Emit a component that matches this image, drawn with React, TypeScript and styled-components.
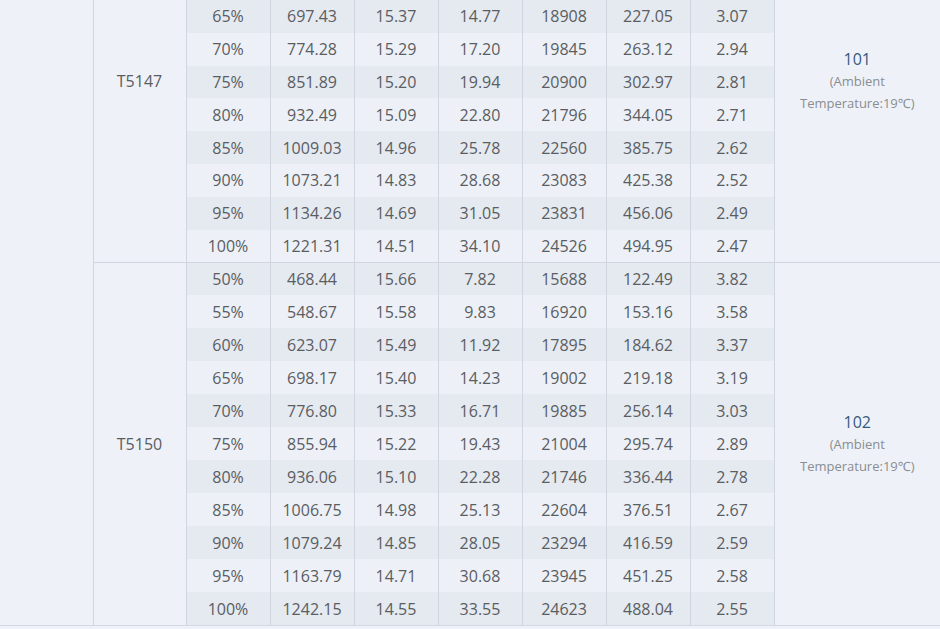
import React from 'react'
import styled, { createGlobalStyle } from 'styled-components'

const GlobalStyle = createGlobalStyle`
    html, body {
        margin: 0;
        padding: 0;
        background: #eef2f8;
        overflow: hidden;
    }
    body {
        font-family: "Open Sans", "Noto Sans", sans-serif;
    }
`

interface Group {
    model: string
    code: string
    rowHeight: number
    // the T5147 block continues above the top edge, so its labels sit higher than the middle
    modelTop?: number
    noteTop?: number
    rows: string[][]
}

const groups: Group[] = [
    {
        model: 'T5147',
        code: '101',
        rowHeight: 32.8,
        modelTop: 70,
        noteTop: 48,
        rows: [
            ['65%', '697.43', '15.37', '14.77', '18908', '227.05', '3.07'],
            ['70%', '774.28', '15.29', '17.20', '19845', '263.12', '2.94'],
            ['75%', '851.89', '15.20', '19.94', '20900', '302.97', '2.81'],
            ['80%', '932.49', '15.09', '22.80', '21796', '344.05', '2.71'],
            ['85%', '1009.03', '14.96', '25.78', '22560', '385.75', '2.62'],
            ['90%', '1073.21', '14.83', '28.68', '23083', '425.38', '2.52'],
            ['95%', '1134.26', '14.69', '31.05', '23831', '456.06', '2.49'],
            ['100%', '1221.31', '14.51', '34.10', '24526', '494.95', '2.47'],
        ],
    },
    {
        model: 'T5150',
        code: '102',
        rowHeight: 33,
        rows: [
            ['50%', '468.44', '15.66', '7.82', '15688', '122.49', '3.82'],
            ['55%', '548.67', '15.58', '9.83', '16920', '153.16', '3.58'],
            ['60%', '623.07', '15.49', '11.92', '17895', '184.62', '3.37'],
            ['65%', '698.17', '15.40', '14.23', '19002', '219.18', '3.19'],
            ['70%', '776.80', '15.33', '16.71', '19885', '256.14', '3.03'],
            ['75%', '855.94', '15.22', '19.43', '21004', '295.74', '2.89'],
            ['80%', '936.06', '15.10', '22.28', '21746', '336.44', '2.78'],
            ['85%', '1006.75', '14.98', '25.13', '22604', '376.51', '2.67'],
            ['90%', '1079.24', '14.85', '28.05', '23294', '416.59', '2.59'],
            ['95%', '1163.79', '14.71', '30.68', '23945', '451.25', '2.58'],
            ['100%', '1242.15', '14.55', '33.55', '24623', '488.04', '2.55'],
        ],
    },
]

const totalRows = groups.reduce((n, g) => n + g.rows.length, 0)

const App: React.FC = () => {
    return (
        <>
            <GlobalStyle />
            <StyledTable>
                <colgroup>
                    <col style={{ width: 93 }} />
                    <col style={{ width: 93 }} />
                    {Array.from({ length: 7 }).map((_, i) => (
                        <col key={i} style={{ width: 84 }} />
                    ))}
                    <col />
                </colgroup>
                <tbody>
                    {groups.map((g, gi) =>
                        g.rows.map((row, ri) => (
                            <StyledRow key={g.model + ri} first={ri === 0 && gi > 0} h={g.rowHeight}>
                                {gi === 0 && ri === 0 && <SideCell rowSpan={totalRows} />}
                                {ri === 0 && (
                                    <ModelCell rowSpan={g.rows.length} top={g.modelTop}>
                                        {g.model}
                                    </ModelCell>
                                )}
                                {row.map((v, ci) => (
                                    <DataCell key={ci} dark={ri % 2 === 0}>
                                        {v}
                                    </DataCell>
                                ))}
                                {ri === 0 && (
                                    <NoteCell rowSpan={g.rows.length} top={g.noteTop}>
                                        <NoteCode>{g.code}</NoteCode>
                                        <NoteText>(Ambient</NoteText>
                                        <NoteText>Temperature:19℃)</NoteText>
                                    </NoteCell>
                                )}
                            </StyledRow>
                        ))
                    )}
                </tbody>
            </StyledTable>
        </>
    )
}

const StyledTable = styled.table`
    width: 940px;
    table-layout: fixed;
    border-collapse: collapse;
    border-bottom: 1px solid #d3d9e1;
    color: #5a5d62;
    font-size: 16px;
`

const StyledRow = styled.tr<{ first?: boolean; h: number }>`
    height: ${({ h }) => h}px;

    & > td {
        border-top: ${({ first }) => (first ? '1px solid #cfd6df' : 'none')};
    }
`

const SideCell = styled.td`
    padding: 0;
    border-right: 1px solid #cfd6df;
    background: #eef2f8;
`

const ModelCell = styled.td<{ top?: number }>`
    padding: ${({ top }) => (top !== undefined ? `${top}px 0 0` : '0')};
    vertical-align: ${({ top }) => (top !== undefined ? 'top' : 'middle')};
    line-height: 22px;
    text-align: center;
    border-right: 1px solid #cfd6df;
    background: #eef2f8;
`

const DataCell = styled.td<{ dark: boolean }>`
    padding: 0;
    text-align: center;
    border-right: 1px solid #cfd6df;
    background: ${({ dark }) => (dark ? '#e5e9f0' : '#edf1f7')};
`

const NoteCell = styled.td<{ top?: number }>`
    padding: ${({ top }) => (top !== undefined ? `${top}px 0 0` : '0')};
    vertical-align: ${({ top }) => (top !== undefined ? 'top' : 'middle')};
    text-align: center;
    background: #eef2f8;
`

const NoteCode = styled.div`
    color: #35597d;
    font-size: 16px;
    line-height: 22px;
`

const NoteText = styled.div`
    color: #8a8d92;
    font-size: 13px;
    line-height: 22px;
`

export default App
